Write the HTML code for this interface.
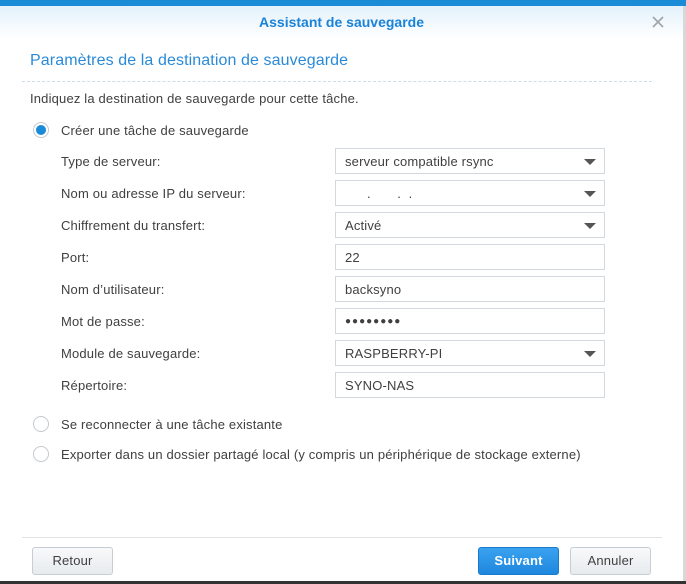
<!DOCTYPE html>
<html><head><meta charset="utf-8"><style>
*{box-sizing:border-box;margin:0;padding:0}
body{width:686px;height:584px;overflow:hidden;background:#ccc;font-family:"Liberation Sans","DejaVu Sans",sans-serif;font-size:13px;color:#404040;position:relative;letter-spacing:0.17px}
#topbar{position:absolute;left:0;top:0;width:686px;height:6px;background:#1a8bd6}
#dlg{position:absolute;left:0;top:6px;width:683px;height:575px;background:#fff}
#hdr{position:absolute;left:0;top:0;width:683px;height:32px;background:linear-gradient(#e3f1fb,#fff);text-align:center;font-weight:bold;font-size:14px;color:#1a83d8;line-height:32px;letter-spacing:0}
#x{position:absolute;left:651px;top:9px}
#rstrip{position:absolute;left:683px;top:6px;width:3px;height:578px;background:#d8d8d8}
#bot{position:absolute;left:0;top:581px;width:686px;height:3px;background:#333}
.t{position:absolute;white-space:nowrap}
h2{position:absolute;left:30px;top:52px;font-weight:normal;font-size:16px;color:#2a8ad8;letter-spacing:0.1px}
#dash{position:absolute;left:22px;top:81px;width:630px;border-top:1px dashed #cfdbe6}
.radio{position:absolute;left:33px;width:16px;height:16px;border:1px solid #c4c9ce;border-radius:50%;background:#fff}
.radio.on::after{content:"";position:absolute;left:2px;top:2px;width:10px;height:10px;border-radius:50%;background:#1a8bd6}
.lbl{position:absolute;left:61px}
.f{position:absolute;left:335px;width:270px;height:26px;border:1px solid #d3d8de;background:#fff;padding-left:9px;line-height:26px;color:#404040}
.f.dd::after{content:"";position:absolute;right:8px;top:10px;border-left:6px solid transparent;border-right:6px solid transparent;border-top:6px solid #555}
#sep{position:absolute;left:22px;top:537px;width:640px;border-top:1px solid #e3e3e3}
.btn{position:absolute;top:547px;height:28px;border:1px solid #c6cdd4;border-radius:3px;background:linear-gradient(#f8f9fa,#e7ebee);text-align:center;line-height:26px;color:#404040}
.btn.p{background:linear-gradient(#3aa2ef,#1e88de);border-color:#1a7bcc;color:#fff;font-weight:bold}
</style></head><body>
<div id="topbar"></div>
<div id="rstrip"></div>
<div id="dlg">
<div id="hdr">Assistant de sauvegarde</div>
<svg id="x" width="14" height="14" viewBox="0 0 14 14"><path d="M2 2L12 12M12 2L2 12" stroke="#a0a4a8" stroke-width="1.6"/></svg>
</div>
<h2>Paramètres de la destination de sauvegarde</h2>
<div id="dash"></div>
<div class="t" style="left:30px;top:91px">Indiquez la destination de sauvegarde pour cette tâche.</div>
<div class="radio on" style="top:122px"></div>
<div class="t" style="left:61px;top:123px">Créer une tâche de sauvegarde</div>

<div class="t lbl" style="top:154px">Type de serveur:</div>
<div class="f dd" style="top:148px">serveur compatible rsync</div>
<div class="t lbl" style="top:186px">Nom ou adresse IP du serveur:</div>
<div class="f dd" style="top:180px"><span style="padding-left:22px">.&nbsp;&nbsp;&nbsp;&nbsp;&nbsp;&nbsp;&nbsp;.&nbsp;&nbsp;.</span></div>
<div class="t lbl" style="top:218px">Chiffrement du transfert:</div>
<div class="f dd" style="top:212px">Activé</div>
<div class="t lbl" style="top:250px">Port:</div>
<div class="f" style="top:244px">22</div>
<div class="t lbl" style="top:282px">Nom d’utilisateur:</div>
<div class="f" style="top:276px">backsyno</div>
<div class="t lbl" style="top:314px">Mot de passe:</div>
<div class="f" style="top:308px;font-size:10px;letter-spacing:1px">●●●●●●●●</div>
<div class="t lbl" style="top:346px">Module de sauvegarde:</div>
<div class="f dd" style="top:340px">RASPBERRY-PI</div>
<div class="t lbl" style="top:378px">Répertoire:</div>
<div class="f" style="top:372px">SYNO-NAS</div>

<div class="radio" style="top:416px"></div>
<div class="t" style="left:61px;top:417px">Se reconnecter à une tâche existante</div>
<div class="radio" style="top:446px"></div>
<div class="t" style="left:61px;top:447px">Exporter dans un dossier partagé local (y compris un périphérique de stockage externe)</div>

<div id="sep"></div>
<div class="btn" style="left:32px;width:81px">Retour</div>
<div class="btn p" style="left:478px;width:81px">Suivant</div>
<div class="btn" style="left:570px;width:81px">Annuler</div>
<div id="bot"></div>
</body></html>
